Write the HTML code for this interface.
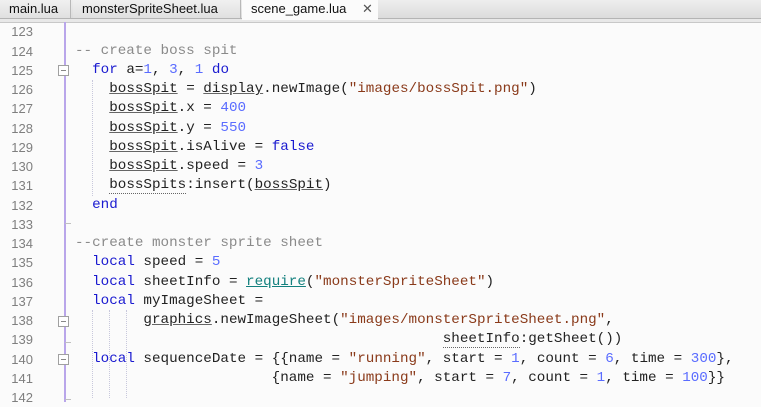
<!DOCTYPE html>
<html><head><meta charset="utf-8"><style>
html,body{margin:0;padding:0;width:761px;height:402px;overflow:hidden;background:#fbfbfb;}
#tabs{position:absolute;left:0;top:0;width:761px;height:18px;background:linear-gradient(#eeeeee,#dcdcdc);border-bottom:1px solid #b4b4b4;}
#tabs2{position:absolute;left:0;top:19px;width:761px;height:3px;background:#e8e8e8;border-bottom:1px solid #c8c8c8;}
.tab{position:absolute;top:0;height:18px;font:13px "Liberation Sans",sans-serif;color:#111;line-height:18px;box-sizing:border-box;padding-left:9px;border-right:1px solid #b8b8b8;background:linear-gradient(#f0f0f0,#e0e0e0);}
.tab.act{background:#fbfbfb;height:20px;border:none;padding-left:9px;}
.ln{width:33px;text-align:right;font:13px "Liberation Sans",sans-serif;color:#7f7f7f;}
.code{position:absolute;left:75px;font-family:"Liberation Mono",monospace;font-size:14.25px;color:#222;}
.r{height:19.26px;line-height:19.26px;white-space:pre;}
.k{color:#1a1ad0}.n{color:#5a6cff}.s{color:#8a3a1a}.c{color:#8a8a8a}.t{color:#13807e;text-decoration:underline}
.u{text-decoration:underline;text-decoration-color:#666}
.d{border-bottom:1px dotted #666}
#fold{position:absolute;left:64px;top:22px;width:2px;height:380px;background:#b9a6ea;}
.box{position:absolute;left:58px;width:11px;height:11px;border:1px solid #a0a0a0;background:#fff;box-sizing:border-box;}
.box:after{content:"";position:absolute;left:2px;top:4px;width:5px;height:1px;background:#888;}
.tick{position:absolute;left:65px;width:6px;height:1px;background:#c0c0c0;}
.g{position:absolute;width:0;border-left:1px dotted #c8c8dc;}
</style></head><body>
<div id="tabs"></div><div id="tabs2"></div>
<div class="tab" style="left:0;width:71px">main.lua</div>
<div class="tab" style="left:73px;width:168px">monsterSpriteSheet.lua</div>
<div class="tab act" style="left:242px;width:136px">scene_game.lua<span style="position:absolute;left:120px;color:#555">✕</span></div>
<div id="fold"></div>
<div class="box" style="top:65px"></div>
<div class="box" style="top:316px"></div>
<div class="box" style="top:354px"></div>
<div class="tick" style="top:223px"></div>
<div class="tick" style="top:342px"></div>
<div class="tick" style="top:399px"></div>
<div class="g" style="left:92px;top:80px;height:116px"></div>
<div class="g" style="left:92px;top:310px;height:88px"></div>
<div class="g" style="left:109px;top:310px;height:88px"></div>
<div class="g" style="left:126px;top:310px;height:88px"></div>
<div style="position:absolute;top:22.4px;left:0;width:40px">
<div class="ln r">123</div><div class="ln r">124</div><div class="ln r">125</div><div class="ln r">126</div><div class="ln r">127</div><div class="ln r">128</div><div class="ln r">129</div><div class="ln r">130</div><div class="ln r">131</div><div class="ln r">132</div><div class="ln r">133</div><div class="ln r">134</div><div class="ln r">135</div><div class="ln r">136</div><div class="ln r">137</div><div class="ln r">138</div><div class="ln r">139</div><div class="ln r">140</div><div class="ln r">141</div><div class="ln r">142</div>
</div>
<div class="code" style="top:22.4px">
<div class="r"> </div>
<div class="r"><span class="c">-- create boss spit</span></div>
<div class="r">  <span class="k">for</span> a=<span class="n">1</span>, <span class="n">3</span>, <span class="n">1</span> <span class="k">do</span></div>
<div class="r">    <span class="u">bossSpit</span> = <span class="u">display</span>.newImage(<span class="s">"images/bossSpit.png"</span>)</div>
<div class="r">    <span class="u">bossSpit</span>.x = <span class="n">400</span></div>
<div class="r">    <span class="u">bossSpit</span>.y = <span class="n">550</span></div>
<div class="r">    <span class="u">bossSpit</span>.isAlive = <span class="k">false</span></div>
<div class="r">    <span class="u">bossSpit</span>.speed = <span class="n">3</span></div>
<div class="r">    <span class="d">bossSpits</span>:insert(<span class="u">bossSpit</span>)</div>
<div class="r">  <span class="k">end</span></div>
<div class="r"> </div>
<div class="r"><span class="c">--create monster sprite sheet</span></div>
<div class="r">  <span class="k">local</span> speed = <span class="n">5</span></div>
<div class="r">  <span class="k">local</span> sheetInfo = <span class="t">require</span>(<span class="s">"monsterSpriteSheet"</span>)</div>
<div class="r">  <span class="k">local</span> myImageSheet =</div>
<div class="r">        <span class="u">graphics</span>.newImageSheet(<span class="s">"images/monsterSpriteSheet.png"</span>,</div>
<div class="r">                                           <span class="d">sheetInfo</span>:getSheet())</div>
<div class="r">  <span class="k">local</span> sequenceDate = {{name = <span class="s">"running"</span>, start = <span class="n">1</span>, count = <span class="n">6</span>, time = <span class="n">300</span>},</div>
<div class="r">                       {name = <span class="s">"jumping"</span>, start = <span class="n">7</span>, count = <span class="n">1</span>, time = <span class="n">100</span>}}</div>
<div class="r"> </div>
</div>
</body></html>
